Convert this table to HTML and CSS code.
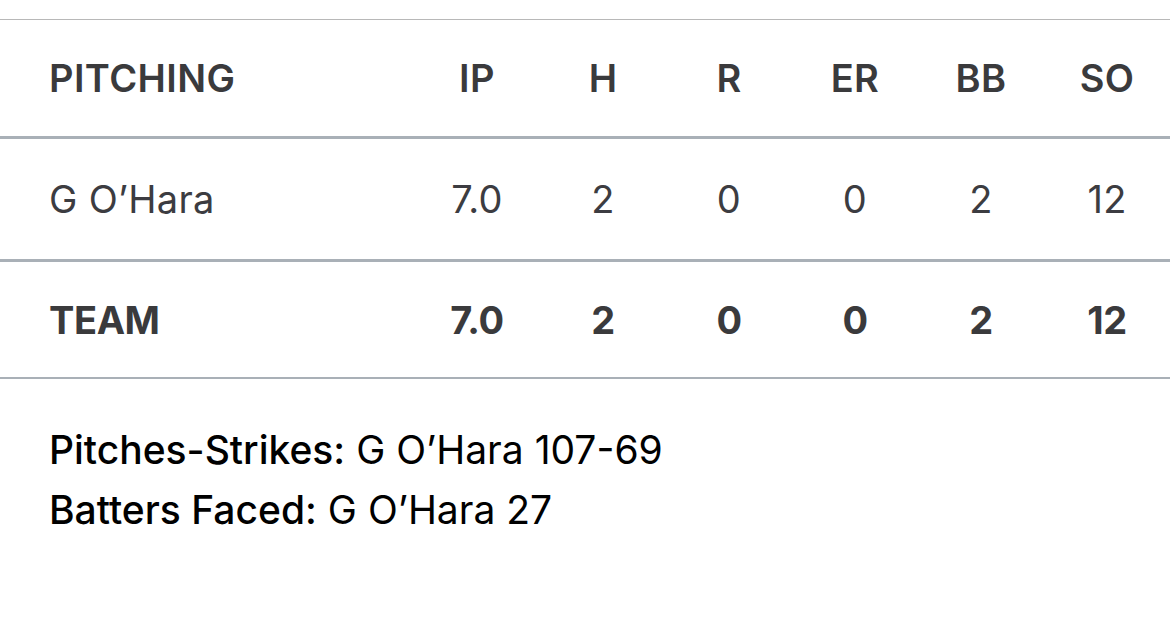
FILE: index.html
```html
<!DOCTYPE html>
<html>
<head>
<meta charset="utf-8">
<link rel="stylesheet" href="styles.css">
</head>
<body>
<div class="page">
  <div class="table">
    <div class="row head">
      <div class="cell name">PITCHING</div>
      <div class="cell">IP</div>
      <div class="cell">H</div>
      <div class="cell">R</div>
      <div class="cell">ER</div>
      <div class="cell">BB</div>
      <div class="cell">SO</div>
    </div>
    <div class="row player">
      <div class="cell name">G O’Hara</div>
      <div class="cell">7.0</div>
      <div class="cell">2</div>
      <div class="cell">0</div>
      <div class="cell">0</div>
      <div class="cell">2</div>
      <div class="cell">12</div>
    </div>
    <div class="row team">
      <div class="cell name">TEAM</div>
      <div class="cell">7.0</div>
      <div class="cell">2</div>
      <div class="cell">0</div>
      <div class="cell">0</div>
      <div class="cell">2</div>
      <div class="cell">12</div>
    </div>
  </div>
  <div class="notes">
    <p class="note"><span class="label">Pitches-Strikes:</span> G O’Hara 107-69</p>
    <p class="note"><span class="label">Batters Faced:</span> G O’Hara 27</p>
  </div>
</div>
</body>
</html>
```

FILE: styles.css
```css
html, body {
  margin: 0;
  padding: 0;
  background: #ffffff;
}

.page {
  width: 1170px;
  height: 626px;
  padding-top: 19px;
  box-sizing: border-box;
  font-family: Inter, "Liberation Sans", sans-serif;
  font-size: 38px;
}

.table {
  border-top: 1px solid #b8b8b8;
}

.row {
  display: grid;
  grid-template-columns: 414px repeat(6, 126px);
  align-items: center;
}

.cell {
  text-align: center;
  line-height: 46px;
}

.cell.name {
  text-align: left;
  padding-left: 49px;
}

.head {
  height: 116px;
  border-bottom: 3px solid #a9b0b7;
  color: #3a3a3c;
  font-weight: 600;
  letter-spacing: 0.4px;
}

.player {
  height: 120px;
  border-bottom: 3px solid #a9b0b7;
  color: #3c3c41;
  font-weight: 400;
  letter-spacing: 0.3px;
}

.team {
  height: 115px;
  border-bottom: 2px solid #a9b0b7;
  color: #3a3a3c;
  font-weight: 700;
  letter-spacing: -0.4px;
}

.notes {
  padding: 41px 0 0 49px;
  color: #000000;
  font-size: 39px;
}

.note {
  margin: 0;
  line-height: 60px;
}

.label {
  font-weight: 500;
}
```
